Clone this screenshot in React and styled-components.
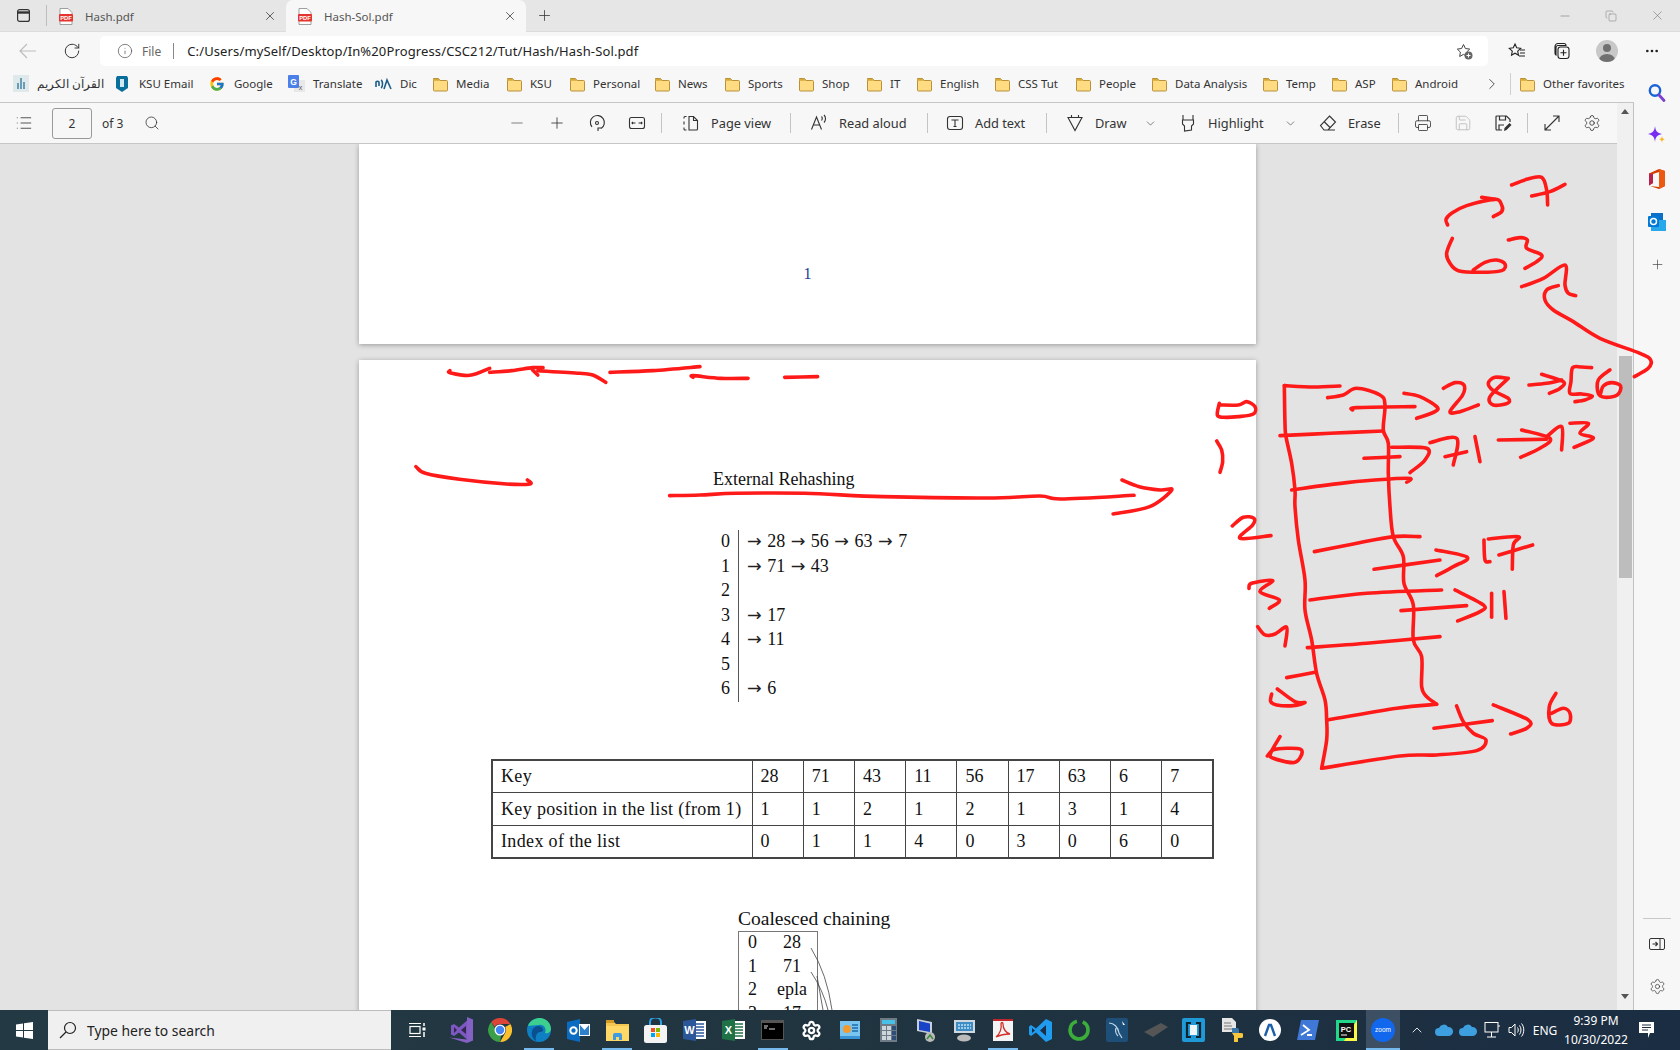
import React from 'react';
import styled, { createGlobalStyle } from 'styled-components';
import { FcGoogle } from 'react-icons/fc';
import {
  List, Search, Minus, Plus, Printer, Save, Settings, ChevronDown, ChevronRight, ChevronUp,
  X, RotateCw, Info, MoreHorizontal, Copy,
} from 'lucide-react';

const ui = '"Noto Sans", "Open Sans", Arial, sans-serif';
const tex = '"Liberation Serif", "Times New Roman", serif';

const Global = createGlobalStyle`
  html, body { margin: 0; padding: 0; overflow: hidden; background: #f7f7f7; }
  * { box-sizing: border-box; }
`;

const Shell = styled.div`
  position: relative;
  width: 1680px;
  height: 1050px;
  display: flex;
  flex-direction: column;
  overflow: hidden;
  font-family: ${ui};
  font-size: 12px;
  color: #333;
  background: #f7f7f7;
`;

/* ---- tabs ---- */
const TabStrip = styled.div`
  display: flex;
  height: 32px;
  flex-shrink: 0;
  background: #e6e6e6;
  border-bottom: 1px solid #dcdcdc;
`;
const WindowMenu = styled.div`
  width: 47px;
  display: flex;
  align-items: center;
  justify-content: center;
  border-right: 1px solid #bdbdbd;
  margin: 5px 0;
`;
const Tab = styled.div`
  width: ${p => p.$w}px;
  height: 32px;
  display: flex;
  align-items: center;
  padding: 0 9px 0 12px;
  gap: 12px;
  background: ${p => (p.$active ? '#f7f7f7' : 'transparent')};
  border-radius: 7px 7px 0 0;
  color: #555;
  font-size: 11.5px;
  svg:last-child { margin-left: auto; }
`;
const NewTab = styled.div`
  width: 36px;
  display: flex;
  align-items: center;
  justify-content: center;
`;
const WindowControls = styled.div`
  margin-left: auto;
  display: flex;
  align-items: center;
  color: #777;
`;
const WinBtn = styled.div`
  width: 46px;
  display: flex;
  justify-content: center;
`;

/* ---- address row ---- */
const AddressRow = styled.div`
  height: 37px;
  flex-shrink: 0;
  display: flex;
  align-items: flex-start;
  padding: 4px 0 0 8px;
  background: #f7f7f7;
`;
const NavBtn = styled.div`
  width: ${p => p.$w || 40}px;
  height: 30px;
  display: flex;
  align-items: center;
  justify-content: center;
  margin-left: ${p => p.$ml || 0}px;
  color: ${p => p.$color || '#333'};
`;
const Omnibox = styled.div`
  width: 1388px;
  height: 30px;
  margin: 0 6px 0 8px;
  display: flex;
  align-items: center;
  padding: 0 15px 0 17px;
  background: #fff;
  border-radius: 5px;
  color: #222;
  font-size: 13px;
`;
const FileLabel = styled.span`
  margin-left: 9px;
  color: #666;
  font-size: 12px;
`;
const OmniSep = styled.span`
  width: 1px;
  height: 16px;
  margin: 0 13px 0 12px;
  background: #888;
`;
const Url = styled.span`
  font-size: 13px;
  letter-spacing: 0.01em;
  color: #222;
`;
const OmniEnd = styled.span`
  margin-left: auto;
  display: flex;
`;
const Avatar = styled.div`
  position: relative;
  width: 22px;
  height: 22px;
  border-radius: 50%;
  overflow: hidden;
  background: #c8c8c8;
  &::before {
    content: '';
    position: absolute;
    left: 7px;
    top: 4px;
    width: 8px;
    height: 8px;
    border-radius: 50%;
    background: #707070;
  }
  &::after {
    content: '';
    position: absolute;
    left: 3px;
    top: 14px;
    width: 16px;
    height: 12px;
    border-radius: 50%;
    background: #707070;
  }
`;

/* ---- body ---- */
const Body = styled.div`
  flex: 1;
  min-height: 0;
  display: flex;
`;
const BrowserCol = styled.div`
  width: 1634px;
  display: flex;
  flex-direction: column;
`;
const Bookmarks = styled.div`
  height: 33px;
  flex-shrink: 0;
  display: flex;
  align-items: center;
  padding: 0 0 4px 13px;
  background: #f7f7f7;
  font-size: 11.5px;
  color: #333;
`;
const Bookmark = styled.div`
  width: ${p => p.$w}px;
  display: flex;
  align-items: center;
  gap: ${p => p.$gap || 8}px;
  white-space: nowrap;
  flex-shrink: 0;
`;
const BookmarkSep = styled.span`
  width: 1px;
  height: 22px;
  margin: 0 8px 0 9px;
  background: #d0d0d0;
`;
const ViewerRow = styled.div`
  flex: 1;
  min-height: 0;
  display: flex;
  border-top: 1px solid #c6c6c6;
  border-right: 1px solid #c2c2c2;
`;
const ViewerCol = styled.div`
  width: 1617px;
  display: flex;
  flex-direction: column;
`;
const Toolbar = styled.div`
  height: 41px;
  flex-shrink: 0;
  display: flex;
  align-items: center;
  padding: 0 5px 0 4px;
  background: #f7f7f7;
  border-bottom: 1px solid #c6c6c6;
  color: #333;
  font-size: 12.8px;
`;
const ToolIcon = styled.div`
  width: 40px;
  height: 32px;
  display: flex;
  align-items: center;
  justify-content: center;
  flex-shrink: 0;
  color: ${p => p.$color || '#333'};
  margin-left: ${p => p.$ml || 0}px;
`;
const PageInput = styled.div`
  width: 40px;
  height: 31px;
  margin-left: 8px;
  display: flex;
  align-items: center;
  justify-content: center;
  border: 1px solid #999;
  border-radius: 3px;
  background: #f7f7f7;
  font-size: 12px;
`;
const PageCount = styled.span`
  margin-left: 10px;
  margin-right: 13px;
  font-size: 12px;
`;
const ToolGroup = styled.div`
  margin-left: auto;
  display: flex;
  align-items: center;
`;
const ToolSep = styled.span`
  width: 1px;
  height: 20px;
  margin: 0 4px;
  flex-shrink: 0;
  background: #c4c4c4;
`;
const ToolBtn = styled.div`
  width: ${p => p.$w}px;
  height: 32px;
  padding: 0 8px 0 ${p => p.$pl || 14}px;
  display: flex;
  align-items: center;
  gap: 11px;
  flex-shrink: 0;
  white-space: nowrap;
  svg:nth-child(3) { margin-left: auto; }
`;

const Viewer = styled.div`
  flex: 1;
  min-height: 0;
  overflow: hidden;
  background: #e3e3e3;
  display: flex;
  flex-direction: column;
  align-items: center;
`;
const Page = styled.div`
  width: 897px;
  flex-shrink: 0;
  margin-right: 2px;
  background: #fff;
  box-shadow: 0 1px 5px rgba(0, 0, 0, 0.32);
  font-family: ${tex};
  color: #111;
  font-size: 18px;
`;
const PageOne = styled(Page)`
  height: 200px;
  padding-top: 120px;
  text-align: center;
  font-size: 16px;
  line-height: 20px;
  color: #1a3f8f;
`;
const PageTwo = styled(Page)`
  margin-top: 16px;
  padding-top: 107px;
  height: 800px;
`;
const SectionTitle = styled.div`
  margin-left: ${p => p.$left}px;
  margin-top: ${p => p.$top || 0}px;
  font-size: ${p => p.$size || 18}px;
  line-height: 24px;
`;
const ChainList = styled.div`
  margin: 39px 0 0 362px;
`;
const ChainRow = styled.div`
  display: flex;
  height: 24.5px;
  line-height: 22px;
`;
const ChainIndex = styled.span`
  width: 17px;
`;
const Chain = styled.span`
  padding-left: 8px;
  border-left: 1px solid #555;
  white-space: nowrap;
  word-spacing: 1px;
`;
const Arrow = styled.span`
  font-family: "DejaVu Sans", sans-serif;
  font-size: 17.5px;
  color: #222;
`;
const KeyTable = styled.table`
  margin: 57px 0 0 132px;
  width: 723px;
  table-layout: fixed;
  border-collapse: collapse;
  border: 2px solid #444;
  td {
    height: 32.8px;
    padding: 1px 0 0 8px;
    border: 1px solid #444;
    white-space: nowrap;
  }
  td:first-child {
    width: 260px;
    letter-spacing: 0.35px;
  }
`;
const CoalBox = styled.div`
  position: relative;
  width: 80px;
  margin: 0 0 0 379px;
  border: 1px solid #777;
  height: 110px;
`;
const CoalRow = styled.div`
  display: grid;
  grid-template-columns: 18px 52px;
  height: 23.7px;
  line-height: 20px;
  padding-left: 9px;
  span:last-child { text-align: center; }
`;
const CoalLinks = styled.svg`
  position: absolute;
  left: 70px;
  top: 0;
  overflow: visible;
`;
const ScrollTrack = styled.div`
  width: 16px;
  display: flex;
  flex-direction: column;
  align-items: center;
  background: #f0f0f0;
  position: relative;
`;
const ScrollArrow = styled.div`
  width: 0;
  height: 0;
  margin-top: ${p => p.$mt}px;
  border-left: 4px solid transparent;
  border-right: 4px solid transparent;
  ${p => (p.$up ? 'border-bottom: 5px solid #555;' : 'border-top: 5px solid #555;')}
`;
const ScrollThumb = styled.div`
  width: 13px;
  height: 222px;
  margin-top: 242px;
  background: #bdbdbd;
`;
const Sidebar = styled.div`
  width: 46px;
  display: flex;
  flex-direction: column;
  align-items: center;
  padding: 2px 0 2px;
  background: #f7f7f7;
`;
const SideBtn = styled.div`
  height: ${p => p.$h || 43}px;
  display: flex;
  align-items: center;
  justify-content: center;
`;
const SideSep = styled.div`
  width: 28px;
  height: 1px;
  margin-top: auto;
  margin-bottom: 3px;
  background: #c8c8c8;
`;

/* ---- taskbar ---- */
const Taskbar = styled.div`
  height: 40px;
  flex-shrink: 0;
  display: flex;
  align-items: stretch;
  background: linear-gradient(90deg, #233a44 0%, #213540 45%, #1b2d42 100%);
  color: #fff;
`;
const StartBtn = styled.div`
  width: 48px;
  flex-shrink: 0;
  display: flex;
  align-items: center;
  justify-content: center;
`;
const SearchBox = styled.div`
  width: 343px;
  flex-shrink: 0;
  display: flex;
  align-items: center;
  gap: 10px;
  padding-left: 11px;
  background: #f0f0f0;
  border: 1px solid #bcbcbc;
  border-width: 1px 0;
  color: #222;
  font-size: 13.9px;
`;
const TaskView = styled.div`
  width: 51px;
  flex-shrink: 0;
  display: flex;
  align-items: center;
  justify-content: center;
  padding-left: 2px;
`;
const TaskItem = styled.div`
  position: relative;
  width: ${p => p.$w}px;
  display: flex;
  align-items: center;
  justify-content: center;
  flex-shrink: 0;
  background: ${p => (p.$current ? '#3d4f62' : 'transparent')};
  &::after {
    content: '';
    display: ${p => (p.$open ? 'block' : 'none')};
    position: absolute;
    left: 50%;
    bottom: 0;
    width: ${p => (p.$current ? 34 : 30)}px;
    height: 2px;
    transform: translateX(-50%);
    background: #76b9ed;
  }
`;
const Tray = styled.div`
  margin-left: auto;
  display: flex;
  align-items: center;
`;
const TrayCell = styled.div`
  width: ${p => p.$w}px;
  display: flex;
  justify-content: center;
  flex-shrink: 0;
  font-size: 12px;
`;
const Clock = styled.div`
  width: 68px;
  text-align: center;
  font-size: 12px;
  line-height: 19px;
`;

/* ---- ink overlay ---- */
const InkLayer = styled.svg`
  position: absolute;
  left: 0;
  top: 0;
  pointer-events: none;
  path {
    fill: none;
    stroke: #ff1a1a;
    stroke-width: 3.6px;
    stroke-linecap: round;
    stroke-linejoin: round;
    vector-effect: non-scaling-stroke;
  }
`;

// catmull-rom through hand picked points, good enough for pen strokes
function smooth(str) {
  const pts = str.trim().split(/\s+/).map(s => s.split(',').map(Number));
  let d = `M${pts[0][0]} ${pts[0][1]}`;
  for (let i = 0; i < pts.length - 1; i++) {
    const p0 = pts[i - 1] || pts[i];
    const p1 = pts[i];
    const p2 = pts[i + 1];
    const p3 = pts[i + 2] || p2;
    const c1x = p1[0] + (p2[0] - p0[0]) / 6;
    const c1y = p1[1] + (p2[1] - p0[1]) / 6;
    const c2x = p2[0] - (p3[0] - p1[0]) / 6;
    const c2y = p2[1] - (p3[1] - p1[1]) / 6;
    d += ` C${c1x} ${c1y} ${c2x} ${c2y} ${p2[0]} ${p2[1]}`;
  }
  return d;
}

const sideInk = [
  // 7
  '995,135 1040,118 1085,112 1100,150 1103,195', '1055,168 1110,155 1155,133',
  // arrow into 7
  '803,255 798,238 815,220 860,197 945,178 965,195 965,215 940,230', '905,172 945,178',
  // 63
  '817,295 800,340 810,370 835,392 900,397 965,392 975,372 950,360 915,367 880,390',
  '985,300 1020,293 1042,300 1040,325 1085,345 1070,365 1035,385',
  '1025,440 1090,415 1155,375 1155,435 1165,460 1187,467',
  '1135,437 1100,450 1095,480 1120,510 1180,545 1260,595 1380,640 1412,660 1405,685 1363,710',
  // the table
  '313,737 400,741 480,738',
  '313,737 315,850 318,890 335,970 345,1050 345,1100 355,1200 375,1320 375,1410 395,1500 410,1600 435,1680 440,1740 440,1800 425,1885',
  '425,1885 660,1848 770,1845 890,1832 918,1800 880,1780 850,1745 830,1698',
  '443,773 490,765 530,745 600,765 615,795 610,870 625,910 625,1000 630,1100 640,1190 670,1250 672,1330 700,1395 700,1500 725,1550 725,1640 740,1670 770,1693',
  '300,887 450,880 610,873',
  '335,1050 500,1028 680,1015 680,1027',
  '403,1235 520,1212 640,1190 720,1190',
  '390,1380 560,1360 785,1350',
  '382,1523 560,1510 780,1490',
  '443,1740 650,1705 770,1693',
  // 0 -> 28 -> 56
  '518,810 530,803 705,800', '672,760 720,770 770,800 765,815 710,835',
  '790,745 825,728 852,735 848,765 810,815 840,815 895,795',
  '985,715 945,712 925,730 940,752 985,775 982,790 940,795 930,770 985,715',
  '1047,735 1100,730 1145,720', '1085,703 1150,725 1140,745 1108,760',
  '1235,683 1205,681 1178,683 1173,725 1170,760 1205,762 1237,768 1215,780 1185,785',
  '1290,690 1255,720 1255,760 1275,772 1312,765 1322,738 1295,728 1270,738 1262,760',
  // 1 -> 71 -> 43
  '552,955 660,950', '635,922 740,925 735,960 690,998',
  '750,908 830,895 820,975', '795,950 860,935', '885,890 900,965',
  '955,900 1100,898', '1025,870 1110,895 1080,925 1022,952',
  '1100,890 1145,860 1145,930',
  '1170,850 1225,850 1200,880 1240,895 1182,922',
  // row labels
  '118,790 112,825 130,832 175,830 220,822 225,800 200,785 175,795 120,795',
  '110,903 125,930 128,965 120,997',
  '157,1158 190,1132 222,1135 218,1155 180,1195 273,1187',
  '207,1345 215,1330 278,1322 240,1355 298,1380 268,1405',
  '233,1460 255,1485 285,1482 320,1462 315,1518',
  '320,1613 405,1597',
  '292,1647 345,1685 375,1688 340,1697 290,1695 272,1685 275,1662',
  '300,1790 272,1840 280,1855 340,1868 362,1850 362,1828 320,1825 280,1830 262,1848',
  // 3 -> 17, 4 -> 11, 6 -> 6
  '582,1288 780,1260', '768,1230 862,1252 820,1280 770,1307',
  '912,1200 915,1260 930,1265',
  '925,1197 1015,1190 1000,1215 997,1288', '957,1245 1058,1215',
  '663,1412 860,1397', '825,1350 910,1395 900,1415 833,1443',
  '935,1360 935,1432', '972,1355 978,1435',
  '762,1765 937,1742', '940,1695 1045,1740 1040,1765 992,1782',
  '1128,1660 1108,1700 1115,1750 1165,1750 1170,1720 1150,1705 1115,1720',
];
const pageInk = [
  '172,92 172,98 210,106 248,85', '248,97 290,92 330,83 350,83', '330,90 340,105',
  '340,92 420,100 445,105 470,127', '478,97 560,92 650,80', '637,112 637,107 690,115 742,115',
  '812,112 875,110', '107,380 125,400 190,418 280,432 325,432 320,420',
  '592,467 650,465 720,460 850,460 1000,470 1200,474 1300,468 1340,477 1480,466',
  '1457,420 1490,440 1530,450 1552,450 1510,500 1440,522',
];

function Ink() {
  return (
    <InkLayer width="1680" height="1050">
      <g transform="translate(1180 140) scale(0.3333)">
        {sideInk.map((s, i) => <path key={i} d={smooth(s)} />)}
      </g>
      <g transform="translate(360 340) scale(0.523 0.3333)">
        {pageInk.map((s, i) => <path key={i} d={smooth(s)} />)}
      </g>
    </InkLayer>
  );
}

/* ---- small icons ---- */
const PdfIcon = () => (
  <svg width="14" height="17" viewBox="0 0 14 17">
    <path d="M1 .5h8l4 4v12H1z" fill="#fff" stroke="#888" strokeWidth=".8" />
    <rect x="0" y="6" width="14" height="7.5" rx="1" fill="#e5342f" />
    <text x="7" y="12" fontSize="5.8" fontWeight="700" fill="#fff" textAnchor="middle" fontFamily="Liberation Sans">PDF</text>
  </svg>
);
const WindowIcon = () => (
  <svg width="15" height="15" viewBox="0 0 15 15" fill="none" stroke="#333" strokeWidth="1.2">
    <rect x="1.6" y="1.6" width="11.8" height="11.8" rx="2" />
    <path d="M1.6 4.5h11.8" strokeWidth="2.4" />
  </svg>
);
const FolderIcon = () => (
  <svg width="16" height="16" viewBox="0 0 16 16" style={{ flexShrink: 0 }}>
    <path d="M1.5 2.5h5l1.6 2h6.4a1 1 0 0 1 1 1V14a1 1 0 0 1-1 1h-12a1 1 0 0 1-1-1V3.5a1 1 0 0 1 1-1z" fill="#ffdc82" stroke="#b8913a" strokeWidth="1" />
    <path d="M1 2.9h5.6l1.5 1.8H1z" fill="#d5a838" />
  </svg>
);
const QuranIcon = () => (
  <svg width="16" height="17" viewBox="0 0 16 17">
    <rect width="16" height="17" fill="#dfe9ec" />
    <path d="M5 14V8M8 14V3M11 14V7" stroke="#4a8aa8" strokeWidth="1.6" />
  </svg>
);
const KsuIcon = () => (
  <svg width="14" height="18" viewBox="0 0 14 18">
    <path d="M2 1h10l1 2v10l-6 4-6-4V3z" fill="#0a6f9c" />
    <rect x="5" y="4" width="4" height="8" fill="#cfe8f2" />
  </svg>
);
const TranslateIcon = () => (
  <svg width="17" height="17" viewBox="0 0 17 17">
    <rect x="6" y="5" width="11" height="12" fill="#e8e8e8" />
    <rect width="11" height="13" rx="1" fill="#4a80e8" />
    <text x="5.5" y="10" fontSize="8.5" fontWeight="700" fill="#fff" textAnchor="middle" fontFamily="Liberation Sans">G</text>
    <text x="12.5" y="15" fontSize="7" fill="#555" textAnchor="middle" fontFamily="Liberation Sans">x</text>
  </svg>
);
const DicIcon = () => (
  <svg width="17" height="14" viewBox="0 0 17 14" fill="none" stroke="#1b5e8a" strokeWidth="1.6">
    <path d="M1 10V5a2 2 0 0 1 3 0v4M6 3c2 1 2 7 0 8M9 12l3-9 4 9" />
  </svg>
);
const StarPlus = () => (
  <svg width="17" height="17" viewBox="0 0 17 17" fill="none" stroke="#444" strokeWidth="1">
    <path d="M7.5 1.5l1.9 4 4.3.6-3.1 3 .7 4.4-3.8-2.1-3.8 2.1.7-4.4-3.1-3 4.3-.6z" />
    <circle cx="12.5" cy="12.5" r="4" fill="#666" stroke="none" />
    <path d="M12.5 10.5v4M10.5 12.5h4" stroke="#fff" />
  </svg>
);
const FavIcon = () => (
  <svg width="18" height="18" viewBox="0 0 18 18" fill="none" stroke="#222" strokeWidth="1.1">
    <path d="M7 2l1.7 3.8 4 .5-3 2.8.8 4.1L7 11.2l-3.5 2 .8-4.1-3-2.8 4-.5z" />
    <path d="M12 8h5M12 11h5M11 14h6" />
  </svg>
);
const CollectionIcon = () => (
  <svg width="18" height="18" viewBox="0 0 18 18" fill="none" stroke="#222" strokeWidth="1.1">
    <path d="M5 1.5h6a2 2 0 0 1 2 2H5a2 2 0 0 0-2 2V13a2 2 0 0 1-1-2V4.5a3 3 0 0 1 3-3z" />
    <rect x="5" y="5" width="11" height="11.5" rx="2.5" />
    <path d="M10.5 7.8v6M7.5 10.8h6" />
  </svg>
);
const PageViewIcon = () => (
  <svg width="18" height="18" viewBox="0 0 18 18" fill="none" stroke="#333" strokeWidth="1.1">
    <path d="M7 2.5h4.5l4 4V15a1 1 0 0 1-1 1H7zM11.5 2.5v4h4" />
    <path d="M4.5 2.5H3a1 1 0 0 0-1 1v1M2 7.5v3M2 13.5v1.5a1 1 0 0 0 1 1h1.5" />
  </svg>
);
const ReadAloudIcon = () => (
  <svg width="18" height="18" viewBox="0 0 18 18" fill="none" stroke="#333" strokeWidth="1.1">
    <path d="M1.5 15.5L6.5 3l5 12.5M3.500 11h6" />
    <path d="M11.500 2.500c1 1 1 3 0 4M14 1c2 2 2 5.500 0 7.500" />
  </svg>
);
const AddTextIcon = () => (
  <svg width="18" height="18" viewBox="0 0 18 18" fill="none" stroke="#333" strokeWidth="1.1">
    <rect x="1.5" y="2.5" width="15" height="13" rx="2.5" />
    <path d="M6 6.500V6h6v.5M9 6v6.500M7.500 12.500h3" />
  </svg>
);
const DrawIcon = () => (
  <svg width="18" height="18" viewBox="0 0 18 18" fill="none" stroke="#333" strokeWidth="1.1">
    <path d="M2 3.500h14L9 16.500zM5.500 1v2.500M12.500 1v2.500" />
  </svg>
);
const HighlightIcon = () => (
  <svg width="18" height="18" viewBox="0 0 18 18" fill="none" stroke="#333" strokeWidth="1.1">
    <path d="M4 1v5h10V1M3.500 6h11v4l-2 2v4l-7 1V12l-2-2z" />
  </svg>
);
const EraseIcon = () => (
  <svg width="18" height="18" viewBox="0 0 18 18" fill="none" stroke="#333" strokeWidth="1.1">
    <path d="M10.500 2l6 6-7.500 8H5l-3.500-4.500zM5.500 8l6 6M5 16h11" />
  </svg>
);
const SaveAsIcon = () => (
  <svg width="18" height="18" viewBox="0 0 18 18" fill="none" stroke="#333" strokeWidth="1.2">
    <path d="M8 16H3a1 1 0 0 1-1-1V3a1 1 0 0 1 1-1h9.500L16 5.500V8" />
    <path d="M5.500 2v4h6V2M5 16v-5h5" />
    <path d="M10 17l.5-3 5-5 2 2-5 5z" fill="#333" stroke="none" />
  </svg>
);
const FitIcon = () => (
  <svg width="18" height="18" viewBox="0 0 18 18" fill="none" stroke="#333" strokeWidth="1.1">
    <rect x="1.5" y="3.5" width="15" height="11" rx="2" />
    <path d="M4 9h3.500M14 9h-3.500M5 8l-1 1 1 1M13 8l1 1-1 1" />
  </svg>
);
const ExpandIcon = () => (
  <svg width="18" height="18" viewBox="0 0 18 18" fill="none" stroke="#333" strokeWidth="1.1">
    <path d="M2 16L16 2M10 2h6v6M2 10v6h6" />
  </svg>
);
const SearchSide = () => (
  <svg width="18" height="20" viewBox="0 0 18 20" fill="none">
    <circle cx="7" cy="7.500" r="5.200" stroke="#1a62d8" strokeWidth="2.400" />
    <path d="M11 12l5 5.500" stroke="#7c3fd0" strokeWidth="2.800" strokeLinecap="round" />
  </svg>
);
const Sparkle = () => (
  <svg width="20" height="20" viewBox="0 0 20 20">
    <path d="M8 0c.6 5 2 7 7 8-5 1-6.400 3-7 8-.6-5-2-7-7-8 5-1 6.400-3 7-8z" fill="#7a2df0" />
    <path d="M15 10c.3 2.200 1 3 3.200 3.300C16 13.600 15.300 14.400 15 17c-.3-2.600-1-3.400-3.200-3.700C14 13 14.700 12.200 15 10z" fill="#ffb31a" />
  </svg>
);
const OfficeIcon = () => (
  <svg width="16" height="20" viewBox="0 0 16 20">
    <path d="M10 0l6 2v15l-6 3-9-3 9 1V3L4 5v9l-4 2.500V4.500z" fill="#d83b01" />
    <path d="M0 4.500L4 5v9l-4 2.500z" fill="#b8214e" />
    <path d="M10 0l6 2v15l-6 3z" fill="#eb5a10" />
  </svg>
);
const OutlookSide = () => (
  <svg width="18" height="18" viewBox="0 0 18 18">
    <rect x="3" y="0" width="12" height="8" fill="#0a6fc9" />
    <rect x="3" y="7" width="15" height="11" fill="#28a8ea" />
    <rect x="0" y="3" width="11" height="11" rx="1" fill="#0078d4" />
    <circle cx="5.500" cy="8.500" r="3" fill="none" stroke="#fff" strokeWidth="1.500" />
  </svg>
);
const PanelIcon = () => (
  <svg width="16" height="14" viewBox="0 0 16 14" fill="none" stroke="#333" strokeWidth="1">
    <rect x=".5" y="1.5" width="15" height="11" rx="1.5" />
    <path d="M11 1.500v11" />
    <path d="M3.500 7h5M6.500 5l2 2-2 2" strokeWidth="1.200" />
  </svg>
);
const WinLogo = () => (
  <svg width="17" height="17" viewBox="0 0 17 17" fill="#fff">
    <path d="M0 2.400l7-1v6.600H0zM8 1.300L17 0v8H8zM0 9h7v6.600l-7-1zM8 9h9v8l-9-1.300z" />
  </svg>
);
const SearchGlass = () => (
  <svg width="18" height="18" viewBox="0 0 18 18" fill="none" stroke="#222" strokeWidth="1.200">
    <circle cx="11" cy="7" r="5.500" />
    <path d="M7 11l-6 6" />
  </svg>
);
const TaskViewIcon = () => (
  <svg width="17" height="16" viewBox="0 0 17 16" fill="none" stroke="#fff" strokeWidth="1.200">
    <path d="M0 1.500h12M0 14.500h12" />
    <rect x="1" y="4.500" width="10" height="7" />
    <path d="M15 1v3" strokeWidth="1.500" />
    <rect x="13.500" y="5.500" width="3" height="3" fill="#fff" stroke="none" />
    <path d="M15 10v5" strokeWidth="1.500" />
  </svg>
);

/* taskbar app icons, 24 box */
const apps = {
  vs: (
    <svg width="24" height="26" viewBox="0 0 24 26">
      <path d="M18 0l6 2.500v21L18 26 0 20.500l18 2V3.500z" fill="#8661c5" />
      <path d="M18 3.500v19l-8-7-5 3.500-3-1.500V8.500l3-1.500 5 3.500z" fill="#7e57c2" />
      <path d="M5 10v6l3-3zM12 13l5 4V9z" fill="#33264d" />
    </svg>
  ),
  chrome: (
    <svg width="24" height="24" viewBox="0 0 24 24">
      <path d="M12 0a12 12 0 0 1 10.400 6H12a6 6 0 0 0-5.200 3L3.200 4A12 12 0 0 1 12 0z" fill="#db4437" />
      <path d="M22.400 6A12 12 0 0 1 12 24l5.200-9a6 6 0 0 0 0-6z" fill="#fbc02d" />
      <path d="M12 24A12 12 0 0 1 3.200 4l5.200 9a4 4 0 0 0 5 3l-1.400 8z" fill="#3a9f48" />
      <circle cx="12" cy="12" r="5.500" fill="#fff" />
      <circle cx="12" cy="12" r="4.200" fill="#4285f4" />
    </svg>
  ),
  edge: (
    <svg width="24" height="24" viewBox="0 0 24 24">
      <circle cx="12" cy="12" r="12" fill="#0f7fc4" />
      <path d="M1 8C3 2 9 0 13 0c6 0 11 5 11 11 0 3-3 5-6 4 2-4-1-9-6-8-5 0-9 1-11 1z" fill="#3ccf8e" />
      <path d="M9 23c-5-3-6-11-1-14 3-2 7-1 8 2 1 2-1 3-3 3-3 0-5 4-4 9z" fill="#0a4f8f" />
    </svg>
  ),
  outlook: (
    <svg width="23" height="23" viewBox="0 0 23 23">
      <path d="M0 3l13-3v23L0 20z" fill="#0a6bc2" />
      <rect x="12" y="5" width="11" height="12" fill="#fff" />
      <path d="M13 6l4.500 5L22 6v10h-9z" fill="#0a6bc2" opacity=".85" />
      <circle cx="6.500" cy="11.500" r="3.200" fill="none" stroke="#fff" strokeWidth="2" />
    </svg>
  ),
  explorer: (
    <svg width="23" height="22" viewBox="0 0 23 22">
      <path d="M0 3h8l2 2h13v17H0z" fill="#f4c752" />
      <path d="M0 1h8v3H0z" fill="#d29b25" />
      <path d="M0 7h23v15H0z" fill="#ffd968" />
      <path d="M7 21v-5a2 2 0 0 1 2-2h5a2 2 0 0 1 2 2v5h-3v-3H10v3z" fill="#3f9be0" />
    </svg>
  ),
  store: (
    <svg width="23" height="25" viewBox="0 0 23 25">
      <path d="M6 7V4a5 4 0 0 1 11 0v3" fill="none" stroke="#2aa3e8" strokeWidth="2" />
      <rect y="7" width="23" height="18" rx="2.500" fill="#f3f3f3" />
      <rect x="7" y="10" width="4" height="4" fill="#f25022" />
      <rect x="12" y="10" width="4" height="4" fill="#7fba00" />
      <rect x="7" y="15" width="4" height="4" fill="#00a4ef" />
      <rect x="12" y="15" width="4" height="4" fill="#ffb900" />
    </svg>
  ),
  word: (
    <svg width="23" height="22" viewBox="0 0 23 22">
      <rect x="9" y="2" width="14" height="18" fill="#fff" />
      <path d="M11 5h10M11 8h10M11 11h10M11 14h10M11 17h10" stroke="#2b579a" strokeWidth="1.500" />
      <path d="M0 2l13-2v22L0 20z" fill="#2b579a" />
      <text x="6.500" y="15" fontSize="11" fontWeight="700" fill="#fff" textAnchor="middle" fontFamily="Liberation Sans">W</text>
    </svg>
  ),
  excel: (
    <svg width="23" height="22" viewBox="0 0 23 22">
      <rect x="9" y="2" width="14" height="18" fill="#fff" />
      <path d="M12 5h9M12 8h9M12 11h9M12 14h9M12 17h9" stroke="#1f7246" strokeWidth="1.500" />
      <path d="M0 2l13-2v22L0 20z" fill="#1f7246" />
      <text x="6.500" y="15" fontSize="11" fontWeight="700" fill="#fff" textAnchor="middle" fontFamily="Liberation Sans">X</text>
    </svg>
  ),
  cmd: (
    <svg width="23" height="20" viewBox="0 0 23 20">
      <rect width="23" height="20" fill="#555" />
      <rect x="1" y="3" width="21" height="16" fill="#000" />
      <path d="M3 6h4M3 8h3M8 9h6" stroke="#ddd" strokeWidth="1" />
    </svg>
  ),
  settings: <Settings size={21} color="#fff" strokeWidth={2.6} />,
  cpanel: (
    <svg width="20" height="18" viewBox="0 0 20 18">
      <rect width="20" height="18" fill="#79c5f0" />
      <circle cx="7" cy="8" r="4" fill="#f29a2e" />
      <path d="M12 4h6M12 7h6M12 10h6" stroke="#1c6aa8" strokeWidth="1.500" />
      <rect y="15" width="20" height="3" fill="#3a93d4" />
    </svg>
  ),
  calc: (
    <svg width="17" height="24" viewBox="0 0 17 24">
      <rect width="17" height="24" fill="#6e7b85" />
      <rect x="2" y="2" width="13" height="4" fill="#49c0e8" />
      {[8, 13, 18].map(y => [2, 7, 12].map(x => (
        <rect key={x + '-' + y} x={x} y={y} width="4" height="4" fill={x === 12 ? '#2c4f7a' : '#ccd5db'} />
      )))}
    </svg>
  ),
  remote: (
    <svg width="24" height="24" viewBox="0 0 24 24">
      <path d="M3 1l15 3v12L3 13z" fill="#c6d0da" />
      <path d="M5 3l11 2.500v8.500L5 12z" fill="#1a44c8" />
      <circle cx="16" cy="19" r="5" fill="#bbb" />
      <path d="M13 21l3-4 3 4" stroke="#3b8a3b" strokeWidth="1.500" fill="none" />
    </svg>
  ),
  netmon: (
    <svg width="24" height="24" viewBox="0 0 24 24">
      <path d="M1 2h21v13H1z" fill="#d0d8df" />
      <path d="M3 4h17v9H3z" fill="#3d8cc4" />
      <path d="M5 7h13M5 10h13" stroke="#bfe2f5" strokeWidth="1.600" strokeDasharray="2 1" />
      <ellipse cx="11" cy="20" rx="7" ry="3.500" fill="#bbb" />
    </svg>
  ),
  acrobat: (
    <svg width="20" height="22" viewBox="0 0 20 22">
      <rect width="20" height="22" fill="#f4f4f4" />
      <rect width="20" height="2" fill="#c0272d" />
      <path d="M3 18c4-3 6-9 5-13 0-2 2-2 2 0 0 5 3 9 7 10-5 0-10 1-14 3z" fill="none" stroke="#d22f27" strokeWidth="1.300" />
    </svg>
  ),
  vscode: (
    <svg width="23" height="23" viewBox="0 0 23 23">
      <path d="M17 0l6 3v17l-6 3-10-9.500L2 17l-2-1.500v-8L2 6l5 3.500z" fill="#1f9cf0" />
      <path d="M17 6l-6 5.500 6 5.500z" fill="#1c2d44" />
      <path d="M3 9v5l3-2.500z" fill="#1c2d44" />
    </svg>
  ),
  ring: (
    <svg width="24" height="24" viewBox="0 0 24 24" fill="none">
      <circle cx="12" cy="12" r="9" stroke="#3bad3b" strokeWidth="3.600" strokeDasharray="40 6" />
    </svg>
  ),
  mysql: (
    <svg width="22" height="24" viewBox="0 0 22 24">
      <rect width="22" height="24" rx="2" fill="#1d4f78" />
      <path d="M3 5c5 0 9 4 10 10l3 5M10 10c-1 3 0 6 2 8" fill="none" stroke="#bcd6e6" strokeWidth="1.200" />
      <path d="M16 3l3 4-2 0z" fill="#fff" />
    </svg>
  ),
  drive: (
    <svg width="24" height="14" viewBox="0 0 24 14">
      <path d="M0 9L17 0l7 4-15 10z" fill="#555" />
    </svg>
  ),
  bracket: (
    <svg width="23" height="24" viewBox="0 0 23 24">
      <rect width="23" height="24" rx="2" fill="#1f9ad6" />
      <path d="M9 5H5v14h4M14 5h4v14h-4" fill="none" stroke="#10222e" strokeWidth="2.200" />
      <rect x="8" y="7" width="7" height="10" fill="#eef6fa" />
    </svg>
  ),
  python: (
    <svg width="22" height="24" viewBox="0 0 22 24">
      <path d="M1 0h10l4 4v10H1z" fill="#e6e6e6" />
      <path d="M3 5h7M3 8h8M3 11h8" stroke="#777" />
      <path d="M11 10h5a2 2 0 0 1 2 2v3h-7z" fill="#3c78aa" />
      <path d="M11 15h9a2 2 0 0 1 0 5h-3v3a2 2 0 0 1-4 0v-5z" fill="#f7c83e" />
    </svg>
  ),
  studio: (
    <svg width="22" height="22" viewBox="0 0 22 22">
      <circle cx="11" cy="11" r="11" fill="#fff" />
      <path d="M6 17l4-11h2l4 11" fill="none" stroke="#1d5fa8" strokeWidth="2.400" />
    </svg>
  ),
  powershell: (
    <svg width="22" height="20" viewBox="0 0 22 20">
      <path d="M4 0h18l-4 20H0z" fill="#3f78d6" />
      <path d="M6 5l6 5-8 5M10 15h5" fill="none" stroke="#fff" strokeWidth="1.800" />
    </svg>
  ),
  pycharm: (
    <svg width="21" height="21" viewBox="0 0 21 21">
      <rect width="21" height="21" fill="#21d789" />
      <path d="M21 0v21H8z" fill="#fcf84a" />
      <rect x="3" y="3" width="15" height="15" fill="#111" />
      <text x="10" y="11.500" fontSize="7.500" fontWeight="700" fill="#fff" textAnchor="middle" fontFamily="Liberation Sans">PC</text>
      <path d="M5 15h6" stroke="#fff" />
    </svg>
  ),
  zoom: (
    <svg width="24" height="24" viewBox="0 0 24 24">
      <circle cx="12" cy="12" r="12" fill="#1268ec" />
      <text x="12" y="14" fontSize="6.500" fill="#fff" textAnchor="middle" fontFamily="Liberation Sans">zoom</text>
    </svg>
  ),
};

const CloudIcon = () => (
  <svg width="18" height="12" viewBox="0 0 18 12">
    <path d="M4 12a4 4 0 0 1 0-8 5 5 0 0 1 9-1 4.500 4.500 0 0 1 1 9z" fill="#3e9fe0" />
  </svg>
);
const NetIcon = () => (
  <svg width="16" height="16" viewBox="0 0 16 16" fill="none" stroke="#fff" strokeWidth="1">
    <rect x="1" y=".5" width="13" height="9.5" />
    <path d="M7.500 10v5M3 15h9M14 4h2" />
  </svg>
);
const VolumeIcon = () => (
  <svg width="17" height="16" viewBox="0 0 17 16" fill="none" stroke="#fff" strokeWidth="1">
    <path d="M1 5.500h2.500L7 2v12l-3.500-3.500H1z" />
    <path d="M9.500 5.500c1 1.500 1 3.500 0 5M11.500 3.500c2 2.500 2 6.500 0 9M13.500 1.500c3 3.500 3 9.500 0 13" />
  </svg>
);
const NoticeIcon = () => (
  <svg width="18" height="18" viewBox="0 0 18 18">
    <path d="M1 1h15v11h-4l-2 5V12H1z" fill="#fff" />
    <path d="M4 4h9M4 6.500h9M4 9h6" stroke="#1b2d42" />
  </svg>
);
const RotateIcon = () => (
  <svg width="18" height="18" viewBox="0 0 18 18" fill="none" stroke="#333" strokeWidth="1.100">
    <path d="M4 13A7 7 0 1 1 13 14.500" />
    <circle cx="9" cy="9" r="1.500" />
    <path d="M10 17v-3h3" />
  </svg>
);

const bookmarkList = [
  { w: 102, label: 'القرآن الكريم', icon: <QuranIcon />, gap: 8 },
  { w: 94, label: 'KSU Email', icon: <KsuIcon />, gap: 10 },
  { w: 79, label: 'Google', icon: <FcGoogle size={16} />, gap: 9 },
  { w: 87, label: 'Translate', icon: <TranslateIcon />, gap: 8 },
  { w: 57, label: 'Dic', icon: <DicIcon />, gap: 8 },
  { w: 74, label: 'Media' },
  { w: 63, label: 'KSU' },
  { w: 85, label: 'Personal' },
  { w: 70, label: 'News' },
  { w: 74, label: 'Sports' },
  { w: 68, label: 'Shop' },
  { w: 50, label: 'IT' },
  { w: 78, label: 'English' },
  { w: 81, label: 'CSS Tut' },
  { w: 76, label: 'People' },
  { w: 111, label: 'Data Analysis' },
  { w: 69, label: 'Temp' },
  { w: 60, label: 'ASP' },
  { w: 92, label: 'Android' },
];

const chains = [
  ['0', [28, 56, 63, 7]],
  ['1', [71, 43]],
  ['2', []],
  ['3', [17]],
  ['4', [11]],
  ['5', []],
  ['6', [6]],
];

const tableRows = [
  ['Key', 28, 71, 43, 11, 56, 17, 63, 6, 7],
  ['Key position in the list (from 1)', 1, 1, 2, 1, 2, 1, 3, 1, 4],
  ['Index of the list', 0, 1, 1, 4, 0, 3, 0, 6, 0],
];

const coalesced = [['0', '28'], ['1', '71'], ['2', 'epla'], ['3', '17']];

const firstApps = [
  ['vs'], ['chrome'], ['edge', true], ['outlook'], ['explorer', true],
  ['store'], ['word'], ['excel'], ['cmd', true], ['settings'],
];
const moreApps = [
  ['cpanel'], ['calc'], ['remote'], ['netmon'], ['acrobat', true], ['vscode'], ['ring'],
  ['mysql'], ['drive'], ['bracket'], ['python'], ['studio'], ['powershell'], ['pycharm'],
];

export default function App() {
  return (
    <Shell>
      <Global />
      <TabStrip>
        <WindowMenu><WindowIcon /></WindowMenu>
        <Tab $w={239}>
          <PdfIcon />
          <span>Hash.pdf</span>
          <X size={14} strokeWidth={1.3} color="#333" />
        </Tab>
        <Tab $w={240} $active>
          <PdfIcon />
          <span>Hash-Sol.pdf</span>
          <X size={14} strokeWidth={1.3} color="#333" />
        </Tab>
        <NewTab><Plus size={17} strokeWidth={1.1} color="#333" /></NewTab>
        <WindowControls>
          <WinBtn><Minus size={14} strokeWidth={1} /></WinBtn>
          <WinBtn><Copy size={12} strokeWidth={1} /></WinBtn>
          <WinBtn><X size={15} strokeWidth={1} /></WinBtn>
        </WindowControls>
      </TabStrip>

      <AddressRow>
        <NavBtn $color="#bdbdbd">
          <svg width="18" height="16" viewBox="0 0 18 16" fill="none" stroke="currentColor" strokeWidth="1.200">
            <path d="M17 8H1M8 1L1 8l7 7" />
          </svg>
        </NavBtn>
        <NavBtn $ml={4}><RotateCw size={18} strokeWidth={1.3} /></NavBtn>
        <Omnibox>
          <Info size={16} strokeWidth={1.1} color="#555" />
          <FileLabel>File</FileLabel>
          <OmniSep />
          <Url>C:/Users/mySelf/Desktop/In%20Progress/CSC212/Tut/Hash/Hash-Sol.pdf</Url>
          <OmniEnd><StarPlus /></OmniEnd>
        </Omnibox>
        <NavBtn $w={45}><FavIcon /></NavBtn>
        <NavBtn $w={45}><CollectionIcon /></NavBtn>
        <NavBtn $w={45}><Avatar /></NavBtn>
        <NavBtn $w={45}><MoreHorizontal size={16} strokeWidth={2} color="#222" /></NavBtn>
      </AddressRow>

      <Body>
        <BrowserCol>
          <Bookmarks>
            {bookmarkList.map(b => (
              <Bookmark key={b.label} $w={b.w} $gap={b.gap}>
                {b.icon || <FolderIcon />}
                <span>{b.label}</span>
              </Bookmark>
            ))}
            <ChevronRight size={18} strokeWidth={1.1} color="#333" />
            <BookmarkSep />
            <Bookmark $w={110}><FolderIcon /><span>Other favorites</span></Bookmark>
          </Bookmarks>

          <ViewerRow>
            <ViewerCol>
              <Toolbar>
                <ToolIcon><List size={18} strokeWidth={1.1} /></ToolIcon>
                <PageInput>2</PageInput>
                <PageCount>of 3</PageCount>
                <ToolIcon $ml={-4}><Search size={16} strokeWidth={1.2} /></ToolIcon>
                <ToolGroup>
                  <ToolIcon $color="#666"><Minus size={18} strokeWidth={1.1} /></ToolIcon>
                  <ToolIcon><Plus size={18} strokeWidth={1.1} /></ToolIcon>
                  <ToolIcon><RotateIcon /></ToolIcon>
                  <ToolIcon><FitIcon /></ToolIcon>
                  <ToolSep />
                  <ToolBtn $w={120} $pl={16}><PageViewIcon /><span>Page view</span></ToolBtn>
                  <ToolSep />
                  <ToolBtn $w={128} $pl={15}><ReadAloudIcon /><span>Read aloud</span></ToolBtn>
                  <ToolSep />
                  <ToolBtn $w={110}><AddTextIcon /><span>Add text</span></ToolBtn>
                  <ToolSep />
                  <ToolBtn $w={114} $pl={15}><DrawIcon /><span>Draw</span><ChevronDown size={13} strokeWidth={1.1} /></ToolBtn>
                  <ToolBtn $w={140}><HighlightIcon /><span>Highlight</span><ChevronDown size={13} strokeWidth={1.1} /></ToolBtn>
                  <ToolBtn $w={89}><EraseIcon /><span>Erase</span></ToolBtn>
                  <ToolSep />
                  <ToolIcon><Printer size={18} strokeWidth={1.1} /></ToolIcon>
                  <ToolIcon $color="#b8b8b8"><Save size={18} strokeWidth={1.1} /></ToolIcon>
                  <ToolIcon><SaveAsIcon /></ToolIcon>
                  <ToolSep />
                  <ToolIcon><ExpandIcon /></ToolIcon>
                  <ToolIcon><Settings size={18} strokeWidth={1.1} /></ToolIcon>
                </ToolGroup>
              </Toolbar>
              <Viewer>
                <PageOne>1</PageOne>
                <PageTwo>
                  <SectionTitle $left={354}>External Rehashing</SectionTitle>
                  <ChainList>
                    {chains.map(([i, keys]) => (
                      <ChainRow key={i}>
                        <ChainIndex>{i}</ChainIndex>
                        <Chain>
                          {keys.map(k => (
                            <React.Fragment key={k}><Arrow>→</Arrow> {k} </React.Fragment>
                          ))}
                        </Chain>
                      </ChainRow>
                    ))}
                  </ChainList>
                  <KeyTable>
                    <tbody>
                      {tableRows.map(r => (
                        <tr key={r[0]}>{r.map((c, i) => <td key={i}>{c}</td>)}</tr>
                      ))}
                    </tbody>
                  </KeyTable>
                  <SectionTitle $left={379} $top={48} $size={19.5}>Coalesced chaining</SectionTitle>
                  <CoalBox>
                    {coalesced.map(([i, v]) => (
                      <CoalRow key={i}><span>{i}</span><span>{v}</span></CoalRow>
                    ))}
                    <CoalLinks width="30" height="90" fill="none" stroke="#444" strokeWidth="0.8">
                      <path d="M2 16Q18 42 23 78" />
                      <path d="M2 40Q14 58 19 78" />
                      <path d="M8 44L14 78" />
                    </CoalLinks>
                  </CoalBox>
                </PageTwo>
              </Viewer>
            </ViewerCol>
            <ScrollTrack>
              <ScrollArrow $up $mt={6} />
              <ScrollThumb />
              <ScrollArrow $mt={416} />
            </ScrollTrack>
          </ViewerRow>
        </BrowserCol>

        <Sidebar>
          <SideBtn><SearchSide /></SideBtn>
          <SideBtn><Sparkle /></SideBtn>
          <SideBtn><OfficeIcon /></SideBtn>
          <SideBtn><OutlookSide /></SideBtn>
          <SideBtn><Plus size={15} strokeWidth={1} color="#333" /></SideBtn>
          <SideSep />
          <SideBtn><PanelIcon /></SideBtn>
          <SideBtn><Settings size={17} strokeWidth={1.1} color="#444" /></SideBtn>
        </Sidebar>
      </Body>

      <Taskbar>
        <StartBtn><WinLogo /></StartBtn>
        <SearchBox><SearchGlass /><span>Type here to search</span></SearchBox>
        <TaskView><TaskViewIcon /></TaskView>
        {firstApps.map(([k, open]) => (
          <TaskItem key={k} $w={38.9} $open={open}>{apps[k]}</TaskItem>
        ))}
        {moreApps.map(([k, open]) => (
          <TaskItem key={k} $w={38.2} $open={open}>{apps[k]}</TaskItem>
        ))}
        <TaskItem $w={34} $open $current>{apps.zoom}</TaskItem>
        <Tray>
          <TrayCell $w={30}><ChevronUp size={16} strokeWidth={1.3} /></TrayCell>
          <TrayCell $w={24}><CloudIcon /></TrayCell>
          <TrayCell $w={24}><CloudIcon /></TrayCell>
          <TrayCell $w={24}><NetIcon /></TrayCell>
          <TrayCell $w={24}><VolumeIcon /></TrayCell>
          <TrayCell $w={34}>ENG</TrayCell>
          <Clock>9:39 PM<br />10/30/2022</Clock>
          <TrayCell $w={34}><NoticeIcon /></TrayCell>
          <TrayCell $w={16} />
        </Tray>
      </Taskbar>

      <Ink />
    </Shell>
  );
}
